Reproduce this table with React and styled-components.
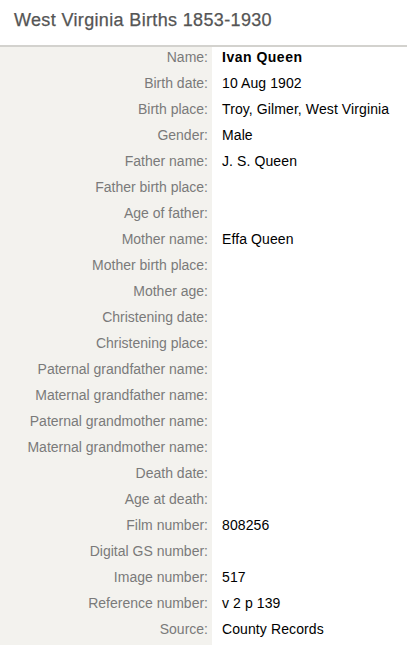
import React from "react";
import styled, { createGlobalStyle } from "styled-components";

const Global = createGlobalStyle`
  html, body { margin: 0; padding: 0; background: #fff; }
  body { font-family: "Liberation Sans", Arial, sans-serif; }
`;

const Page = styled.div`
  width: 407px;
`;

const Header = styled.div`
  padding: 8px 0 13px 14px;
  border-bottom: 2px solid #d3d2ce;
`;

const Title = styled.h1`
  margin: 0;
  font-size: 18px;
  line-height: 24px;
  font-weight: normal;
  letter-spacing: 0.35px;
  color: #555;
  -webkit-text-stroke: 0.25px #555;
`;

const Table = styled.div`
  display: grid;
  grid-template-columns: 212px 1fr;
`;

const Label = styled.div`
  background: #f3f2ee;
  text-align: right;
  padding: 2px 4px 7px 0;
  font-size: 14px;
  line-height: 17px;
  color: #7a7a7a;
  white-space: nowrap;
`;

const Value = styled.div`
  padding: 2px 0 7px 10px;
  font-size: 14px;
  line-height: 17px;
  color: #000;
  font-weight: ${(p) => (p.$bold ? "bold" : "normal")};
  letter-spacing: ${(p) => (p.$bold ? "0.5px" : "0.1px")};
  white-space: nowrap;
`;

const rows = [
  ["Name", "Ivan Queen", true],
  ["Birth date", "10 Aug 1902"],
  ["Birth place", "Troy, Gilmer, West Virginia"],
  ["Gender", "Male"],
  ["Father name", "J. S. Queen"],
  ["Father birth place", ""],
  ["Age of father", ""],
  ["Mother name", "Effa Queen"],
  ["Mother birth place", ""],
  ["Mother age", ""],
  ["Christening date", ""],
  ["Christening place", ""],
  ["Paternal grandfather name", ""],
  ["Maternal grandfather name", ""],
  ["Paternal grandmother name", ""],
  ["Maternal grandmother name", ""],
  ["Death date", ""],
  ["Age at death", ""],
  ["Film number", "808256"],
  ["Digital GS number", ""],
  ["Image number", "517"],
  ["Reference number", "v 2 p 139"],
  ["Source", "County Records"],
];

export default function App() {
  return (
    <Page>
      <Global />
      <Header>
        <Title>West Virginia Births 1853-1930</Title>
      </Header>
      <Table>
        {rows.map(([label, value, bold]) => (
          <React.Fragment key={label}>
            <Label>{label}:</Label>
            <Value $bold={bold}>{value || "\u00a0"}</Value>
          </React.Fragment>
        ))}
      </Table>
    </Page>
  );
}
